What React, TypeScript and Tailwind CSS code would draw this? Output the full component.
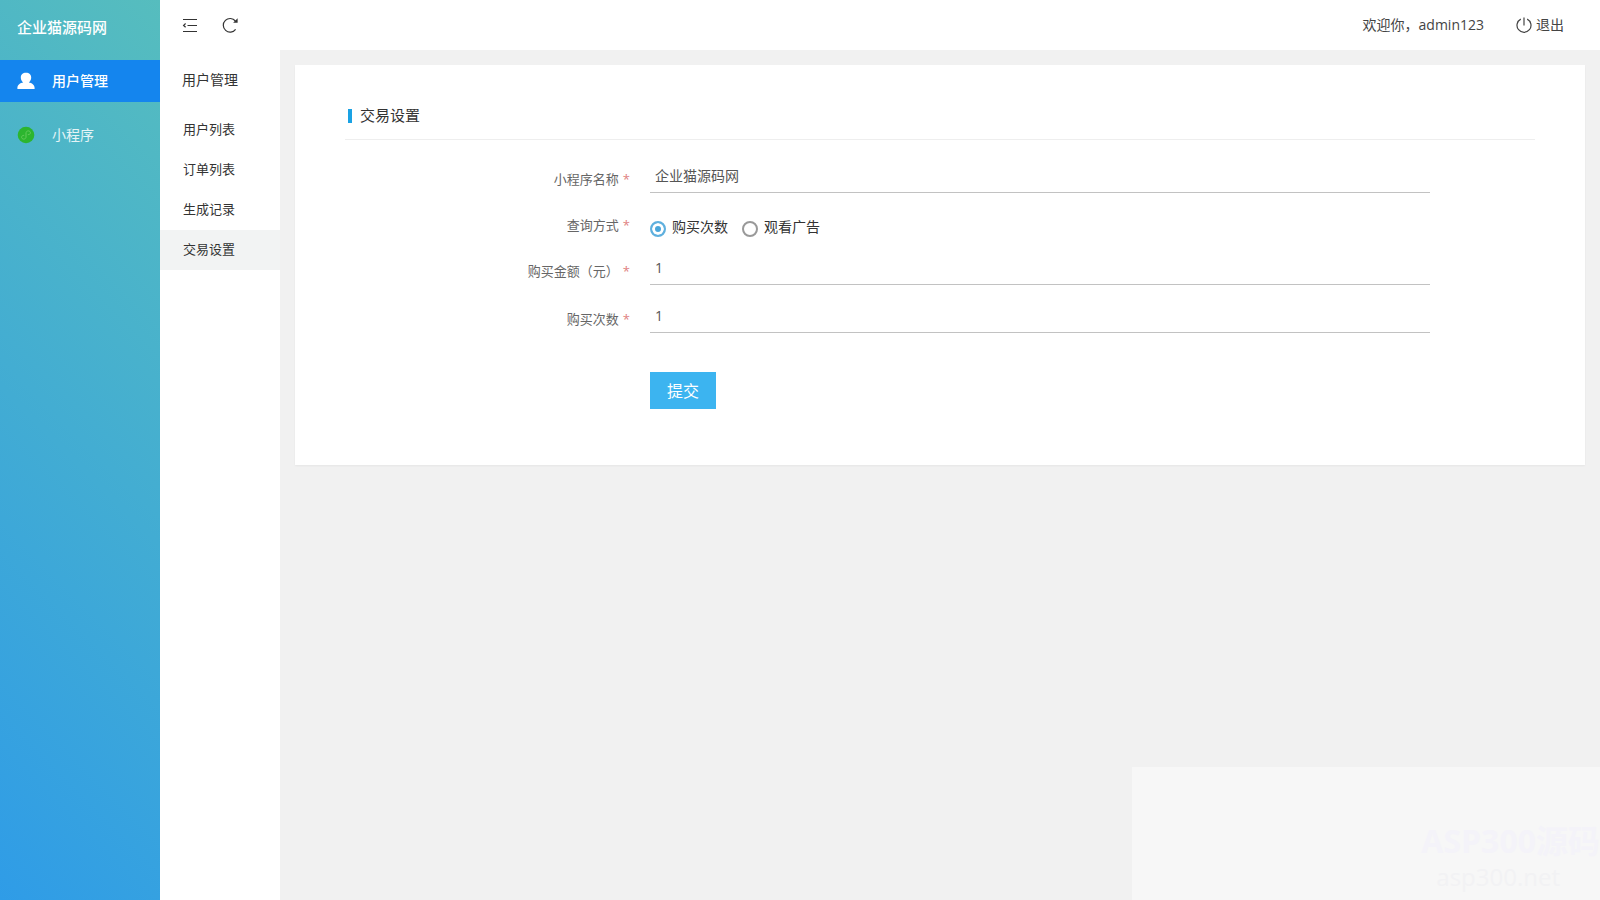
import React, { useState } from 'react';
import { clsx } from 'clsx';

const subMenu = ['用户列表', '订单列表', '生成记录', '交易设置'];

const payModes = [
  { value: 'buy', label: '购买次数' },
  { value: 'ad', label: '观看广告' },
];

const UserIcon = () => (
  <svg viewBox="0 0 18 18" className="w-[18px] h-[18px]" fill="currentColor" aria-hidden="true">
    <path d="M9 0.800c3.200 0 5.200 1.900 5.200 4.800 0 2-0.900 3.800-2.400 4.900 3 0.500 5.800 2.300 5.800 5.200V17H0.400v-1.300c0-2.900 2.800-4.700 5.800-5.200C4.700 9.400 3.800 7.600 3.800 5.600c0-2.900 2-4.800 5.200-4.800z" />
  </svg>
);

const MiniProgramIcon = () => (
  <svg viewBox="0 0 18 18" className="w-[18px] h-[18px]" fill="none" aria-hidden="true">
    <circle cx="9" cy="9" r="8.300" fill="#2cb52f" />
    <path
      d="M6.800 9.300c-1.300 0-2.200 0.800-2.200 1.900s0.900 1.900 2.100 1.900c1.300 0 2.300-0.900 2.300-2V6.900c0-1.100 1-2 2.300-2 1.200 0 2.100 0.800 2.100 1.900s-0.900 1.900-2.200 1.900"
      stroke="#63cb5a"
      strokeWidth="1"
      strokeLinecap="round"
    />
  </svg>
);

const FoldIcon = () => (
  <svg viewBox="0 0 16 16" className="w-4 h-4" fill="none" stroke="currentColor" strokeWidth="1.200" aria-hidden="true">
    <path d="M1 2.500h14M5.500 8.500h9.500M1 14.500h14" />
    <path d="M3.600 6.500L1.600 8.400l2 1.900" />
  </svg>
);

const RefreshIcon = () => (
  <svg viewBox="0 0 16 16" className="w-4 h-4" fill="none" stroke="currentColor" strokeWidth="1.200" aria-hidden="true">
    <path d="M13.600 12.300A6.800 6.800 0 1 1 13.400 4" />
    <path d="M15.600 1.300v4.500h-4.500z" fill="currentColor" stroke="none" />
  </svg>
);

const PowerIcon = () => (
  <svg viewBox="0 0 16 16" className="w-4 h-4" fill="none" stroke="currentColor" strokeWidth="1.200" aria-hidden="true">
    <path d="M8 0.500v8" />
    <path d="M4.800 2.100a7 7 0 1 0 6.400 0" />
  </svg>
);

type RowProps = {
  label: string;
  htmlFor?: string;
  children: React.ReactNode;
};

const FormRow: React.FC<RowProps> = ({ label, htmlFor, children }) => {
  const Label = htmlFor ? 'label' : 'span';
  return (
    <div className="grid grid-cols-[305fr_780fr_105fr] mb-[15px]">
      <Label
        htmlFor={htmlFor}
        id={htmlFor ? undefined : 'mode-label'}
        className="flex items-center justify-end gap-1 pt-1 pr-5 text-[13px] leading-5 text-[#666]"
      >
        {label}
        <span className="text-[#e08080]">*</span>
      </Label>
      {children}
    </div>
  );
};

const inputClass =
  'w-full h-[33px] px-[5px] pb-0.5 border-b border-[#c2c2c2] bg-transparent text-sm text-[#555] outline-none';

export default function App() {
  const [active, setActive] = useState('交易设置');
  const [mode, setMode] = useState('buy');
  const [name, setName] = useState('企业猫源码网');
  const [price, setPrice] = useState('1');
  const [times, setTimes] = useState('1');

  return (
    <div className="relative flex min-h-screen overflow-hidden bg-[#f1f1f1] text-sm text-[#333] font-['Open_Sans','Noto_Sans_CJK_SC',sans-serif]">
      {/* Main sidebar */}
      <aside className="w-40 shrink-0 bg-[linear-gradient(45deg,#2f9ce7,#56bdbe)] text-white">
        <h1 className="flex items-center h-15 pb-1 px-[17px] text-[15px] font-medium">企业猫源码网</h1>
        <nav className="flex flex-col gap-3">
          <a href="#user" className="flex items-center gap-[17px] h-[42px] px-[17px] bg-[#1485ee] font-medium">
            <UserIcon />
            用户管理
          </a>
          <a href="#mini" className="flex items-center gap-[17px] h-[42px] px-[17px] text-white/85">
            <MiniProgramIcon />
            小程序
          </a>
        </nav>
      </aside>

      <div className="flex flex-1 flex-col min-w-0">
        <header className="flex items-center justify-between h-[50px] pl-[22px] pr-9 bg-white">
          <div className="flex items-center gap-6">
            <button type="button" aria-label="收起菜单">
              <FoldIcon />
            </button>
            <button type="button" aria-label="刷新">
              <RefreshIcon />
            </button>
          </div>
          <div className="flex items-center gap-8 text-[#444]">
            <span>欢迎你，admin123</span>
            <a href="#logout" className="flex items-center gap-1">
              <PowerIcon />
              退出
            </a>
          </div>
        </header>

        <div className="flex flex-1">
          {/* Sub menu */}
          <nav className="w-[120px] shrink-0 bg-white">
            <h2 className="flex items-center h-15 px-[22px]">用户管理</h2>
            <ul>
              {subMenu.map((item) => (
                <li key={item}>
                  <a
                    href="#list"
                    onClick={() => setActive(item)}
                    className={clsx('flex items-center h-10 px-[23px] pb-0.5 text-[13px]', active === item && 'bg-[#f2f3f3]')}
                  >
                    {item}
                  </a>
                </li>
              ))}
            </ul>
          </nav>

          <main className="flex-1 min-w-0 p-[15px]">
            <section className="px-[50px] pt-8 pb-14 bg-white shadow-xs">
              <div className="flex items-center gap-2 h-[43px] pb-1 pl-[3px] border-b border-[#eee]">
                <span className="w-1 h-3.5 bg-[#1aa2e4]" />
                <h3 className="text-[15px]">交易设置</h3>
              </div>

              <form className="pt-5" onSubmit={(e) => e.preventDefault()}>
                <FormRow label="小程序名称" htmlFor="name">
                  <input id="name" className={inputClass} value={name} onChange={(e) => setName(e.target.value)} />
                </FormRow>

                <FormRow label="查询方式">
                  <div role="radiogroup" aria-labelledby="mode-label" className="flex items-center gap-3.5 h-[29px] pt-2">
                    {payModes.map((m) => (
                      <label key={m.value} className="flex items-center gap-1.5">
                        <input
                          type="radio"
                          name="mode"
                          value={m.value}
                          checked={mode === m.value}
                          onChange={() => setMode(m.value)}
                          className="appearance-none w-4 h-4 mt-1 rounded-full border-2 border-[#999] bg-white checked:border-[#5fb0de] checked:bg-[#4aa6da] checked:shadow-[inset_0_0_0_3px_#fff]"
                        />
                        {m.label}
                      </label>
                    ))}
                  </div>
                </FormRow>

                <FormRow label="购买金额（元）" htmlFor="price">
                  <input id="price" className={inputClass} value={price} onChange={(e) => setPrice(e.target.value)} />
                </FormRow>

                <FormRow label="购买次数" htmlFor="times">
                  <input id="times" className={inputClass} value={times} onChange={(e) => setTimes(e.target.value)} />
                </FormRow>

                <div className="grid grid-cols-[305fr_780fr_105fr] pt-6">
                  <button type="submit" className="col-start-2 w-[66px] h-[37px] bg-[#3cb4f0] text-base text-white">
                    提交
                  </button>
                </div>
              </form>
            </section>
          </main>
        </div>
      </div>

      {/* Faded corner mark */}
      <div className="absolute right-0 bottom-0 w-[468px] h-[133px] pt-14 bg-[#f7f7f7] text-right pointer-events-none">
        <p className="text-[32px] leading-9 font-bold text-[#f4f3f9]">ASP300源码</p>
        <p className="pr-10 text-2xl leading-9 text-[#f2f2f4]">asp300.net</p>
      </div>
    </div>
  );
}
